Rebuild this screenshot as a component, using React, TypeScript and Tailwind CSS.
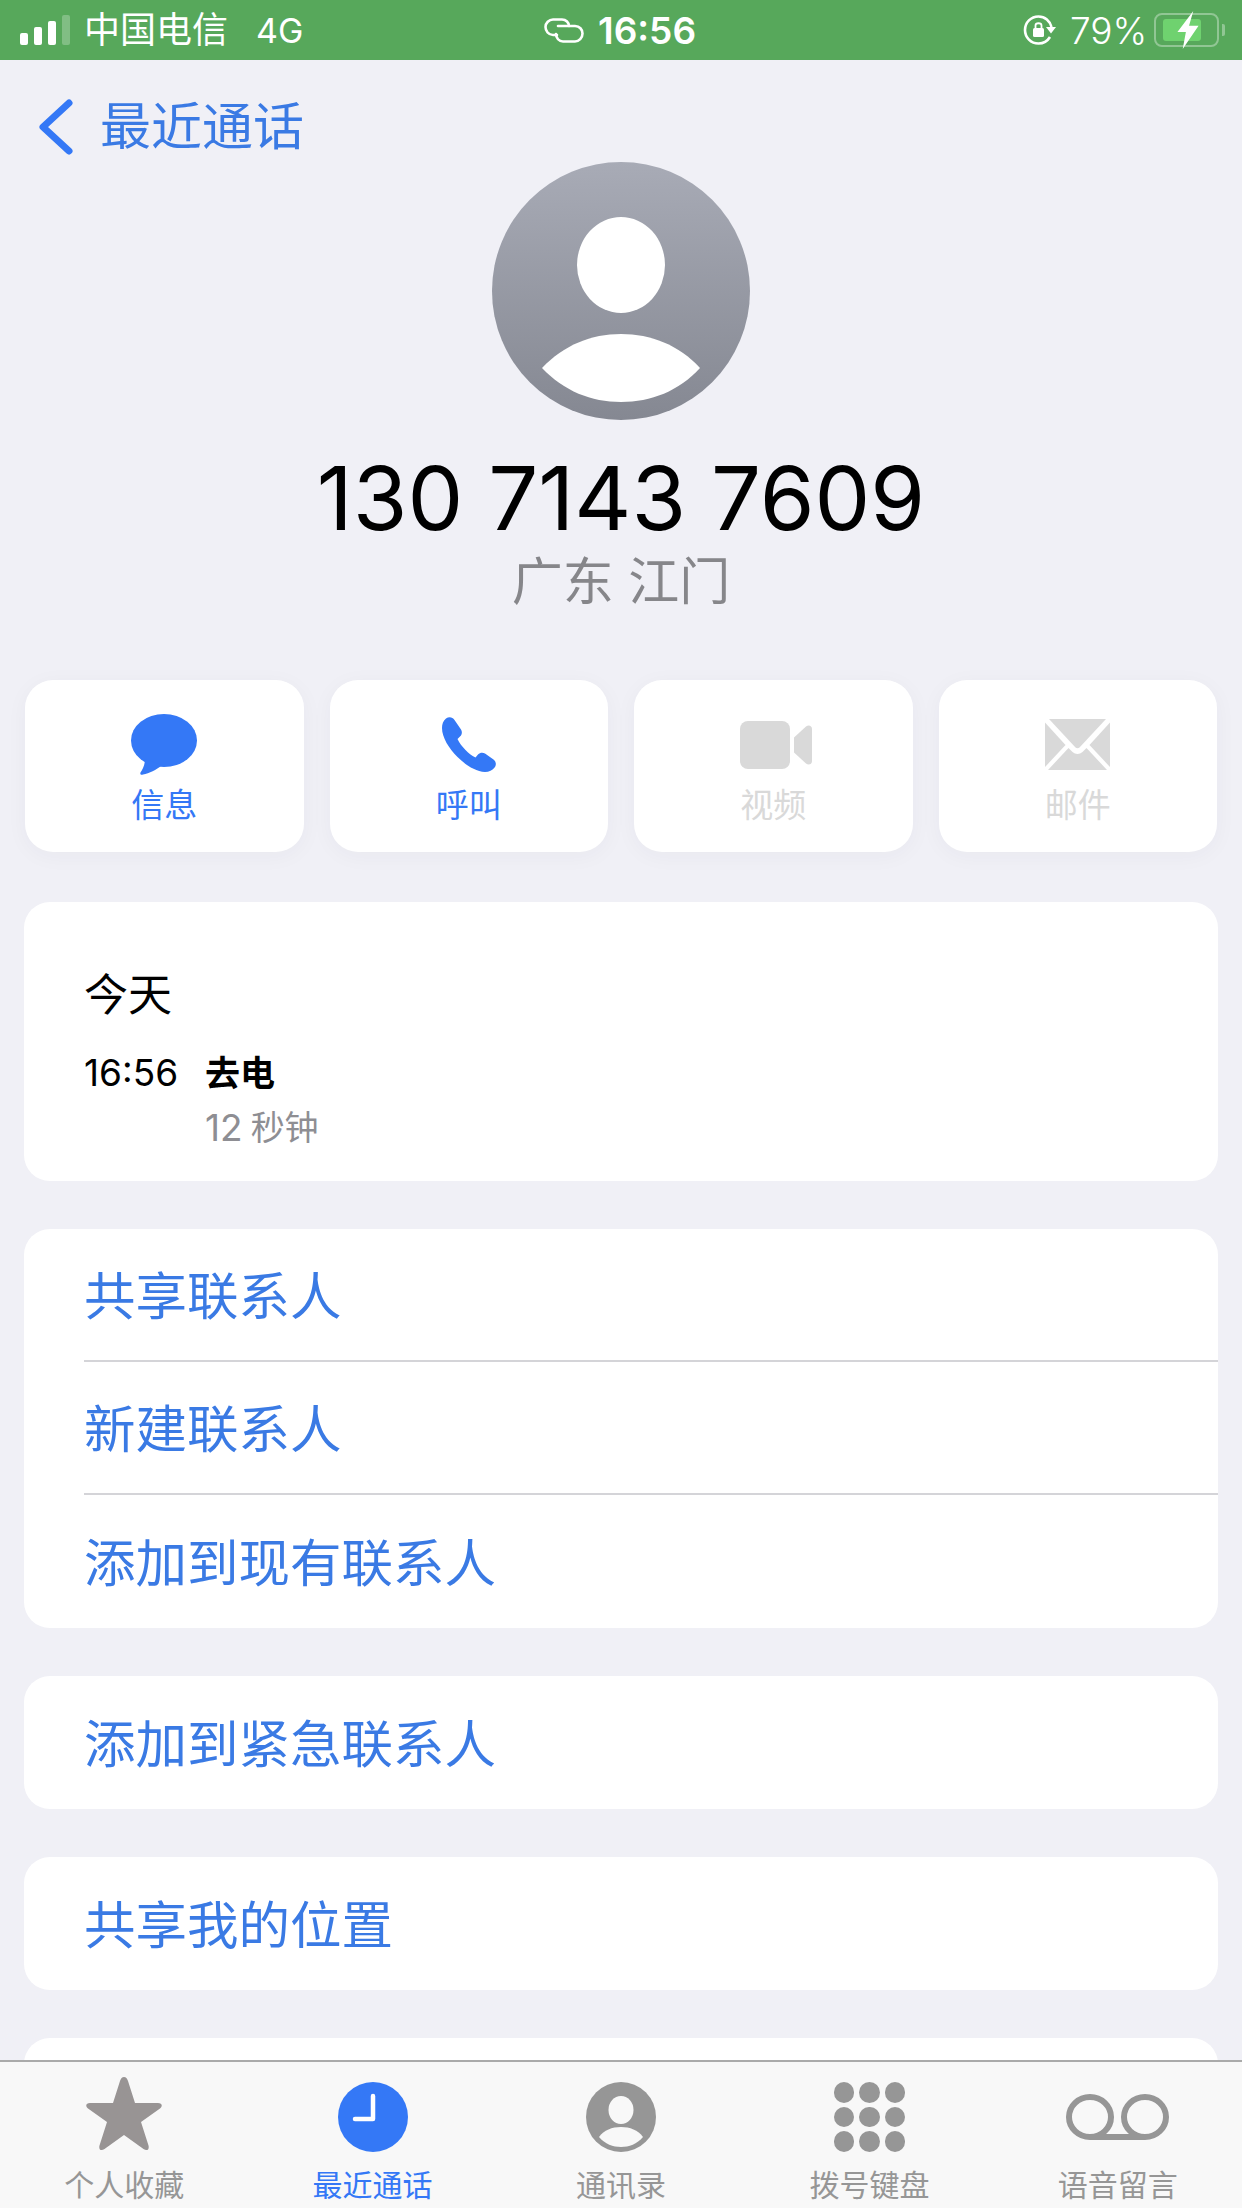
import type { ReactNode } from 'react';

const font = "font-['Inter','Noto_Sans_CJK_SC',sans-serif]";

function IconBubble({ className }: { className?: string }) {
  return (
    <svg viewBox="0 0 66 61" fill="currentColor" className={className}>
      <ellipse cx="33" cy="26.500" rx="33" ry="26.500" />
      <path d="M14 45C14 51 11.500 55.500 9.500 58.500 8.800 60.300 10 61.200 12 60.600 18.500 59 25 56.500 31 51Z" />
    </svg>
  );
}

function IconPhone({ className }: { className?: string }) {
  return (
    <svg viewBox="0 0 54 55" fill="currentColor" className={className}>
      <path d="M4 1.500C7 -0.500 10.500 0 12.500 3L19 12.500C20.500 15 20 17.500 18 19.500L15.500 22C17.500 26 20 29.500 23.500 33 26.500 36 29.500 38.500 33.500 40.500L36 37.500C38 35.500 40.500 35 43 36.500L51.500 42.500C54 44.500 54.500 47.500 53 50 50.500 53.500 47 55 43 55 33 54.500 23 47.500 15.500 40 7 31.500 0 20.500 0 11 0 7 1 4 4 1.500Z" />
    </svg>
  );
}

function IconVideo({ className }: { className?: string }) {
  return (
    <svg viewBox="0 0 72 48" fill="currentColor" className={className}>
      <rect x="0" y="0" width="50" height="48" rx="8" />
      <path d="M54 16.500 66 5.500C68.500 3.500 72 4.500 72 8V40C72 43.500 68.500 44.500 66 42.500L54 31.500Z" />
    </svg>
  );
}

function IconMail({ className }: { className?: string }) {
  return (
    <svg viewBox="0 0 65 51" fill="currentColor" className={className}>
      <path d="M4 0H61L34.500 28.500C33.500 29.500 31.500 29.500 30.500 28.500Z" />
      <path d="M0 3.500 20.500 26 0 48Z" />
      <path d="M65 3.500 44.500 26 65 48Z" />
      <path d="M23.500 29 27.500 33C30.500 35.500 34.500 35.500 37.500 33L41.500 29 62 51H3Z" />
    </svg>
  );
}

function Avatar() {
  return (
    <div className="h-[258px] w-[258px] overflow-hidden rounded-full bg-gradient-to-b from-[#a8abb6] to-[#858892]">
      <svg viewBox="0 0 258 258" className="h-full w-full" fill="#fff">
        <ellipse cx="129" cy="103" rx="44" ry="48" />
        <path d="M50 206C72 183 99 172 129 172 159 172 187 183 208 206 187 229 159 240 129 240 99 240 72 229 50 206Z" />
      </svg>
    </div>
  );
}

function StatusBar() {
  return (
    <div className="flex h-[60px] flex-none items-center bg-[#57a85b] pl-[20px] text-white">
      <div className="flex h-[30px] items-end gap-[6px]">
        <span className="h-[12px] w-[8px] rounded-[2px] bg-white" />
        <span className="h-[18px] w-[8px] rounded-[2px] bg-white" />
        <span className="h-[24px] w-[8px] rounded-[2px] bg-white" />
        <span className="h-[30px] w-[8px] rounded-[2px] bg-white/25" />
      </div>
      <span className="ml-[14px] w-[172px] flex-none text-[36px] leading-none">中国电信</span>
      <span className="w-[288px] flex-none pt-[2px] text-[34px] leading-none">4G</span>
      <svg viewBox="0 0 40 25" fill="none" stroke="currentColor" strokeWidth={2.6} strokeLinecap="round" className="h-[25px] w-[40px] flex-none">
        <path d="M13 17H9C4.500 17 1.500 13 1.500 9 1.500 5 5 1.500 9 1.500H18C22 1.500 25 4.500 25 8" />
        <path d="M14 8H31C35.500 8 38.500 11.500 38.500 15.500 38.500 20 35 23.500 31 23.500H19C15 23.500 12 20 12 16" />
      </svg>
      <span className="ml-[14px] w-[425px] flex-none text-[37px] font-semibold leading-none">16:56</span>
      <svg viewBox="0 0 34 30" fill="none" stroke="currentColor" strokeWidth={2.6} className="h-[30px] w-[34px] flex-none">
        <path d="M27 22C24.500 26 20.500 28.500 15.500 28.500 8 28.500 2 22.500 2 15 2 7.500 8 1.500 15.500 1.500 22 1.500 27 6 28.500 12" />
        <path d="M23 12H33L28 18.500Z" fill="currentColor" stroke="none" />
        <rect x="10" y="13" width="11" height="9" rx="1.500" fill="currentColor" stroke="none" />
        <path d="M12.500 13V10.500C12.500 7.500 18.500 7.500 18.500 10.500V13" strokeWidth={1.8} />
      </svg>
      <span className="ml-[13px] w-[84px] flex-none text-[37px] font-light leading-none">79%</span>
      <div className="relative flex h-[34px] w-[65px] flex-none items-center rounded-[8px] border-2 border-white/35 pl-[7px]">
        <span className="h-[22px] w-[38px] rounded-[3px] bg-[#6fd26f]" />
        <svg viewBox="0 0 22 36" fill="#fff" className="absolute left-[20px] top-[-4px] h-[38px] w-[24px]">
          <path d="M16 0 1 20H9L6 36 21 14H12Z" />
        </svg>
      </div>
      <span className="ml-[3px] h-[12px] w-[3px] flex-none rounded-r-[2px] bg-white/35" />
    </div>
  );
}

function ActionButton({ label, icon, off }: { label: string; icon: ReactNode; off?: boolean }) {
  return (
    <div
      className={`flex h-[172px] flex-col items-center rounded-[28px] bg-white shadow-[0_4px_22px_rgba(40,40,70,0.04)] ${
        off ? 'text-[#d9d9d9]' : 'text-[#3478f6]'
      }`}
    >
      <div className="flex h-[95px] flex-none items-end justify-center">{icon}</div>
      <span className="mt-[10px] text-[33px] leading-[40px]">{label}</span>
    </div>
  );
}

function LinkRow({ label, line }: { label: string; line?: boolean }) {
  return (
    <div className="pl-[60px]">
      <div className={`flex h-[133px] items-center pt-[4px] text-[51.500px] leading-none text-[#3a7ae4] ${line ? 'border-b-2 border-[#d4d4d8]' : ''}`}>
        {label}
      </div>
    </div>
  );
}

function Tab({ label, icon, active }: { label: string; icon: ReactNode; active?: boolean }) {
  return (
    <div className={`flex flex-col items-center ${active ? 'text-[#3478f6]' : 'text-[#969696]'}`}>
      <div className="flex h-[90px] items-end justify-center">{icon}</div>
      <span className="mt-[15px] text-[30px] leading-[36px]">{label}</span>
    </div>
  );
}

export default function App() {
  const keypad = [0, 1, 2, 3, 4, 5, 6, 7, 8];
  return (
    <div className={`flex h-[2208px] w-[1242px] flex-col overflow-hidden bg-[#f0f0f6] ${font}`}>
      <StatusBar />

      <div className="min-h-0 flex-1 overflow-hidden px-[25px]">
        {/* Nav */}
        <div className="flex h-[102px] items-center pt-[31px] text-[#3a7ae4]">
          <svg viewBox="0 0 34 56" fill="none" stroke="#3478f6" strokeWidth={7} strokeLinecap="round" strokeLinejoin="round" className="ml-[14px] h-[56px] w-[34px] flex-none">
            <path d="M30 4 4 28 30 52" />
          </svg>
          <span className="ml-[27px] text-[51px] leading-none">最近通话</span>
        </div>

        {/* Header */}
        <div className="flex flex-col items-center">
          <Avatar />
          <div className="mt-[28px] text-[88.500px] leading-[100px] text-black">130 7143 7609</div>
          <div className="mt-[4px] text-[51px] leading-[60px] text-[#86868a]">广东 江门</div>
        </div>

        {/* Actions */}
        <div className="mt-[68px] grid grid-cols-4 gap-[26px]">
          <ActionButton label="信息" icon={<IconBubble className="h-[61px] w-[66px]" />} />
          <ActionButton label="呼叫" icon={<IconPhone className="mb-[3px] h-[55px] w-[54px]" />} />
          <ActionButton label="视频" off icon={<IconVideo className="mb-[6px] ml-[6px] h-[48px] w-[72px]" />} />
          <ActionButton label="邮件" off icon={<IconMail className="mb-[5px] h-[51px] w-[65px]" />} />
        </div>

        {/* Today */}
        <div className="-mx-[1px] mt-[50px] h-[279px] rounded-[26px] bg-white pl-[60px] pt-[66px]">
          <div className="text-[44px] leading-[54px] text-black">今天</div>
          <div className="mt-[29px] flex">
            <span className="w-[121px] flex-none text-[37px] leading-[44px] text-black">16:56</span>
            <div>
              <div className="text-[35px] font-bold leading-[44px] text-black">去电</div>
              <div className="mt-[11px] flex items-center gap-[8px] text-[34px] leading-[44px] text-[#8e8e93]">
                <span className="text-[37px]">12</span>
                <span>秒钟</span>
              </div>
            </div>
          </div>
        </div>

        {/* Links */}
        <div className="-mx-[1px] mt-[48px] overflow-hidden rounded-[26px] bg-white">
          <LinkRow label="共享联系人" line />
          <LinkRow label="新建联系人" line />
          <LinkRow label="添加到现有联系人" />
        </div>
        <div className="-mx-[1px] mt-[48px] overflow-hidden rounded-[26px] bg-white">
          <LinkRow label="添加到紧急联系人" />
        </div>
        <div className="-mx-[1px] mt-[48px] overflow-hidden rounded-[26px] bg-white">
          <LinkRow label="共享我的位置" />
        </div>
        <div className="-mx-[1px] mt-[48px] overflow-hidden rounded-[26px] bg-white">
          <LinkRow label="" />
        </div>
      </div>

      {/* Tab bar */}
      <div className="grid h-[148px] flex-none grid-cols-5 border-t-2 border-[#aaaaaa] bg-[#f8f8f8]">
        <Tab
          label="个人收藏"
          icon={
            <svg viewBox="0 0 76 74" fill="#989494" className="mb-[1px] h-[74px] w-[76px]">
              <path d="M38 0C40 0 41 1.500 42 4L49 26H72C76 26 77 29 74 31.500L55 45 62.500 68.500C63.500 72.500 61 74.500 57.500 72L38 58 18.500 72C15 74.500 12.500 72.500 13.500 68.500L21 45 2 31.500C-1 29 0 26 4 26H27L34 4C35 1.500 36 0 38 0Z" />
            </svg>
          }
        />
        <Tab
          active
          label="最近通话"
          icon={
            <svg viewBox="0 0 70 70" className="h-[70px] w-[70px]">
              <circle cx="35" cy="35" r="35" fill="#3478f6" />
              <path d="M35 14V37H17" fill="none" stroke="#fff" strokeWidth={4.5} strokeLinecap="round" strokeLinejoin="round" />
            </svg>
          }
        />
        <Tab
          label="通讯录"
          icon={
            <svg viewBox="0 0 70 70" className="h-[70px] w-[70px]">
              <circle cx="35" cy="35" r="35" fill="#969696" />
              <ellipse cx="35" cy="28" rx="12.500" ry="14" fill="#f8f8f8" />
              <path d="M13 55C18 48 26 45 35 45 44 45 52 48 57 55 51 62 43 65 35 65 27 65 19 62 13 55Z" fill="#f8f8f8" />
            </svg>
          }
        />
        <Tab
          label="拨号键盘"
          icon={
            <div className="grid h-[70px] w-[71px] grid-cols-3 gap-x-[5px] gap-y-[4px]">
              {keypad.map((k) => (
                <span key={k} className="rounded-full bg-[#969696]" />
              ))}
            </div>
          }
        />
        <Tab
          label="语音留言"
          icon={
            <svg viewBox="0 0 103 46" fill="none" stroke="#969696" strokeWidth={6} className="mb-[12px] h-[46px] w-[103px]">
              <ellipse cx="24" cy="23" rx="21" ry="20" />
              <ellipse cx="79" cy="23" rx="21" ry="20" />
              <path d="M24 43H79" />
            </svg>
          }
        />
      </div>
    </div>
  );
}
